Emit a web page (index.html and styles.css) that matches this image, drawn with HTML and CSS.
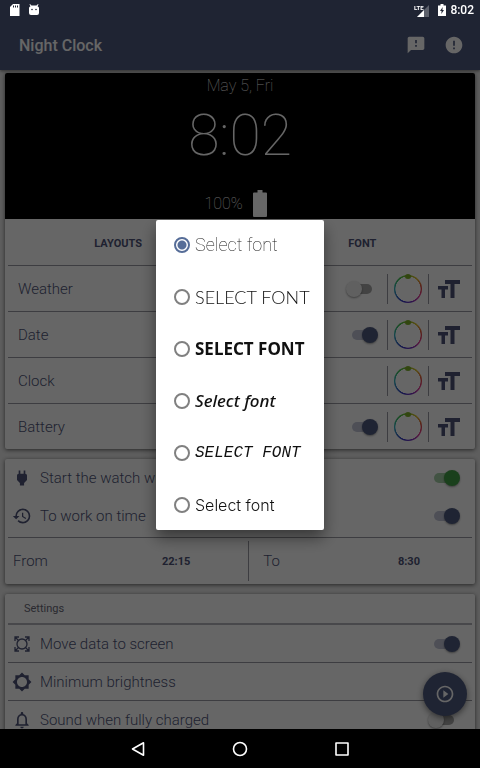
FILE: index.html
```html
<!DOCTYPE html>
<html lang="en">
<head>
	<meta charset="UTF-8">
	<meta name="viewport" content="width=device-width, initial-scale=1">
	<title>Night Clock</title>
	<link rel="stylesheet" href="styles.css">
</head>
<body>
<!-- shared icons -->
<svg class="defs" aria-hidden="true">
	<symbol id="size" viewBox="0 0 22 18">
		<path d="M7 0h15v4h-5.500v14h-4V4H7zM0 6h10v3.500H7V18H3.500V9.500H0z"/>
	</symbol>
</svg>

<div class="status">
	<svg width="10" height="12" viewBox="0 0 10 12"><path fill="#fff" d="M3 0h6.500v12H0V3z"/><path stroke="#1f2433" d="M3.500 1.500v2M5.500 1.500v2M7.500 1.500v2"/></svg>
	<svg width="12" height="12" viewBox="0 0 12 12"><path fill="#fff" d="M2 0l1.500 1.500h5L10 0l.5.5-1 1.700Q11 3 11 4v5q0 2-2 2H3q-2 0-2-2V4q0-1 1.500-1.800l-1-1.700z"/><circle cx="4" cy="5.500" r=".8" fill="#1f2433"/><circle cx="8" cy="5.500" r=".8" fill="#1f2433"/></svg>
	<svg class="signal" width="16" height="13" viewBox="0 0 16 13"><path fill="#5d616c" d="M15 1v12H3z"/><path fill="#fff" d="M10 6v7H3z"/><text x="0" y="6">LTE</text></svg>
	<svg width="8" height="12" viewBox="0 0 8 12"><path fill="#fff" d="M2.500 0h3v1.500H8V12H0V1.500h2.500z"/><path fill="#1f2433" d="M4.700 3L2 7h1.600L3.300 10 6 6H4.400z"/></svg>
	<span>8:02</span>
</div>

<header class="toolbar">
	<h1>Night Clock</h1>
	<button aria-label="Feedback"><svg width="20" height="20" viewBox="0 0 24 24"><path d="M20 2H4c-1.100 0-1.990.9-1.990 2L2 22l4-4h14c1.100 0 2-.9 2-2V4c0-1.100-.9-2-2-2zm-7 12h-2v-2h2v2zm0-4h-2V6h2v4z"/></svg></button>
	<button aria-label="About"><svg width="20" height="20" viewBox="0 0 24 24"><path d="M12 2C6.480 2 2 6.480 2 12s4.480 10 10 10 10-4.480 10-10S17.520 2 12 2zm1 15h-2v-2h2v2zm0-4h-2V7h2v6z"/></svg></button>
</header>

<main>
	<section class="card">
		<div class="preview">
			<p class="date">May 5, Fri</p>
			<p class="time">8:02</p>
			<p class="battery">100% <svg width="14" height="27" viewBox="0 0 14 27"><path d="M4.500 0h5v2.500H13q1 0 1 1V26q0 1-1 1H1q-1 0-1-1V3.500q0-1 1-1h3.500z"/></svg></p>
		</div>
		<div class="tabs">
			<button>LAYOUTS</button>
			<button>FONT</button>
		</div>
		<div class="row item">
			<label for="weather">Weather</label>
			<input type="checkbox" class="switch" id="weather">
			<button class="color" aria-label="Weather color"><span class="ring"></span></button>
			<button class="size" aria-label="Weather size"><svg width="22" height="18"><use href="#size"/></svg></button>
		</div>
		<div class="row item">
			<label for="date">Date</label>
			<input type="checkbox" class="switch" id="date" checked>
			<button class="color" aria-label="Date color"><span class="ring"></span></button>
			<button class="size" aria-label="Date size"><svg width="22" height="18"><use href="#size"/></svg></button>
		</div>
		<div class="row item">
			<span class="name">Clock</span>
			<button class="color" aria-label="Clock color"><span class="ring"></span></button>
			<button class="size" aria-label="Clock size"><svg width="22" height="18"><use href="#size"/></svg></button>
		</div>
		<div class="row item">
			<label for="battery">Battery</label>
			<input type="checkbox" class="switch" id="battery" checked>
			<button class="color" aria-label="Battery color"><span class="ring"></span></button>
			<button class="size" aria-label="Battery size"><svg width="22" height="18"><use href="#size"/></svg></button>
		</div>
	</section>

	<section class="card">
		<div class="row plain">
			<svg width="20" height="20" viewBox="0 0 24 24"><path d="M16.010 7L16 3h-2v4h-4V3H8v4h-.01C7 6.990 6 7.990 6 8.990v5.490L9.500 18v3h5v-3l3.500-3.510v-5.500c0-1-1-2-1.990-1.990z"/></svg>
			<label for="charge">Start the watch when charging</label>
			<input type="checkbox" class="switch green" id="charge" checked>
		</div>
		<div class="row plain">
			<svg width="20" height="20" viewBox="0 0 24 24"><path d="M13 3a9 9 0 0 0-9 9H1l3.890 3.890.07.14L9 12H6c0-3.870 3.130-7 7-7s7 3.130 7 7-3.130 7-7 7c-1.930 0-3.680-.79-4.940-2.060l-1.420 1.420A8.954 8.954 0 0 0 13 21a9 9 0 0 0 0-18zm-1 5v5l4.280 2.540.72-1.210-3.500-2.080V8H12z"/></svg>
			<label for="ontime">To work on time</label>
			<input type="checkbox" class="switch" id="ontime" checked>
		</div>
		<div class="period">
			<div><span>From</span><button>22:15</button></div>
			<div><span>To</span><button>8:30</button></div>
		</div>
	</section>

	<section class="card">
		<h2>Settings</h2>
		<div class="row">
			<svg width="20" height="20" viewBox="0 0 20 20"><g fill="none" stroke="#4e5478" stroke-width="1.300"><circle cx="10" cy="10" r="5"/><path d="M3 7V3h4M13 3h4v4M17 13v4h-4M7 17H3v-4M3 3l3.500 3.500M17 3l-3.500 3.500M17 17l-3.500-3.500M3 17l3.500-3.500"/></g></svg>
			<label for="move">Move data to screen</label>
			<input type="checkbox" class="switch" id="move" checked>
		</div>
		<div class="row">
			<svg width="20" height="20" viewBox="0 0 24 24"><path d="M20 15.310L23.310 12 20 8.690V4h-4.690L12 .69 8.690 4H4v4.690L.69 12 4 15.310V20h4.690L12 23.310 15.310 20H20v-4.690zM12 18c-3.310 0-6-2.690-6-6s2.690-6 6-6 6 2.690 6 6-2.690 6-6 6z"/></svg>
			<button class="name">Minimum brightness</button>
		</div>
		<div class="row">
			<svg width="20" height="20" viewBox="0 0 24 24"><path d="M12 22c1.100 0 2-.9 2-2h-4c0 1.100.9 2 2 2zm6-6v-5c0-3.070-1.630-5.640-4.500-6.320V4c0-.83-.67-1.500-1.500-1.500s-1.500.67-1.500 1.500v.68C7.640 5.360 6 7.920 6 11v5l-2 2v1h16v-1l-2-2zm-2 1H8v-6c0-2.480 1.510-4.500 4-4.500s4 2.020 4 4.500v6z"/></svg>
			<label for="sound">Sound when fully charged</label>
			<input type="checkbox" class="switch" id="sound">
		</div>
	</section>

	<button class="fab" aria-label="Start"><svg width="20" height="20" viewBox="0 0 24 24"><path d="M10 16.500l6-4.500-6-4.500v9zM12 2C6.480 2 2 6.480 2 12s4.480 10 10 10 10-4.480 10-10S17.520 2 12 2zm0 18c-4.410 0-8-3.590-8-8s3.590-8 8-8 8 3.590 8 8-3.590 8-8 8z"/></svg></button>
</main>

<nav>
	<button aria-label="Back"><svg width="24" height="24" viewBox="0 0 24 24"><path d="M17.500 5.800v12.400L6.500 12z"/></svg></button>
	<button aria-label="Home"><svg width="24" height="24" viewBox="0 0 24 24"><circle cx="12" cy="12" r="6.500"/></svg></button>
	<button aria-label="Recent"><svg width="24" height="24" viewBox="0 0 24 24"><path d="M6 6h12v12H6z"/></svg></button>
</nav>

<!-- font dialog -->
<div class="scrim">
	<form class="dialog" role="dialog" aria-label="Font">
		<label class="thin"><input type="radio" name="font" checked>Select font</label>
		<label class="hand"><input type="radio" name="font">SELECT FONT</label>
		<label class="brush"><input type="radio" name="font">SELECT FONT</label>
		<label class="script"><input type="radio" name="font">Select font</label>
		<label class="digital"><input type="radio" name="font">SELECT FONT</label>
		<label class="round"><input type="radio" name="font">Select font</label>
	</form>
</div>
</body>
</html>
```
FILE: styles.css
```css
*{padding:0;margin:0;box-sizing:border-box;}
body{
	height: 100vh;
	display:flex;
	flex-direction:column;
	overflow:hidden;
	background: #ebebeb;
	color:#4e5478;
	font-family: Roboto, "Liberation Sans", sans-serif;
	font-size:15px;
	font-weight:300;
}
button{
	border:0;
	background:none;
	color:inherit;
	font:inherit;
	cursor:pointer;
}
svg{
	display:block;
	flex:none;
	fill:currentColor;
}
.defs{
	position:absolute;
	width:0;
	height:0;
}

/* system bars stay above the scrim */
.status{
	position:fixed;
	top:0;
	left:0;
	right:0;
	z-index:3;
	height: 20px;
	padding:0 6px 0 10px;
	display:flex;
	align-items:center;
	gap:8px;
	color:#fff;
	font-size:12px;
	font-weight:500;
}
.status .signal{
	margin-left:auto;
	overflow:visible;
}
.status .signal text{
	fill:#fff;
	font-size:6px;
	font-weight:700;
}
.status span{
	margin-left:-4px;
}
nav{
	position:relative;
	z-index:3;
	flex:none;
	height: 39px;
	background:#000;
	display:flex;
	justify-content:center;
	align-items:center;
	gap:78px;
}
nav svg{
	fill:none;
	stroke:#fff;
	stroke-width:1.6;
	stroke-linejoin:round;
}

.toolbar{
	flex:none;
	height: 70px;
	padding:20px 16px 0 19px;
	display:flex;
	align-items:center;
	gap:18px;
	background:#4e5a80;
	color:#fff;
	box-shadow:0 1px 3px rgba(0,0,0,.5);
}
.toolbar h1{
	flex:1;
	font-size:16px;
	font-weight:500;
}

main{
	position:relative;
	flex:1;
	min-height:0;
	overflow:hidden;
	padding:3px 5px 0;
	display:flex;
	flex-direction:column;
	gap:10px;
}
.card{
	flex:none;
	background:#fff;
	border-radius:2px;
	box-shadow:0 1px 4px rgba(0,0,0,.6);
}

.preview{
	height: 146px;
	padding:3px 0 2px;
	background:#000;
	color:#fff;
	border-radius:2px 2px 0 0;
	display:flex;
	flex-direction:column;
	align-items:center;
	justify-content:space-between;
	font-size:16px;
	font-weight:100;
}
.preview .date{
	line-height:20px;
}
.preview .time{
	font-size:57px;
	line-height:60px;
	padding-bottom:14px;
}
.preview .battery{
	padding-right:9px;
	display:flex;
	align-items:center;
	gap:10px;
}

.tabs{
	height: 46px;
	padding:3px 21% 0 19%;
	display:flex;
	justify-content:space-between;
	align-items:center;
}
.tabs button{
	font-size:11px;
	font-weight:700;
}

.row{
	height: 38px;
	margin:0 3px;
	padding:0 12px 0 4px;
	border-top:1px solid #9a9aa2;
	display:flex;
	align-items:center;
	gap:8px;
}
.row label,
.row .name{
	flex:1;
	text-align:left;
	white-space:nowrap;
	overflow:hidden;
}
.row.item{
	height: 46px;
	padding-left:10px;
	gap:9px;
}
.row.plain{
	border-top:0;
}
.color{
	width: 42px;
	height: 30px;
	border:solid #9a9aa2;
	border-width:0 1px;
	display:flex;
	justify-content:center;
	align-items:center;
}
.ring{
	position:relative;
	width: 28px;
	height: 28px;
	border-radius:50%;
	background:radial-gradient(circle closest-side, #fff 88%, transparent 92%), conic-gradient(#90c020, #e0c030 40deg, #e04040 85deg, #e040a0 125deg, #7030c0 165deg, #3838c0 205deg, #30b0c0 270deg, #40c050 320deg, #90c020);
}
.ring::after{
	content:"";
	position:absolute;
	top:-1px;
	left:11px;
	width: 6px;
	height: 5px;
	border-radius:50%;
	background:#7eb02a;
}

.switch{
	appearance:none;
	position:relative;
	flex:none;
	width: 32px;
	height: 16px;
}
.switch::before{
	content:"";
	position:absolute;
	top:3px;
	left:6px;
	width: 20px;
	height: 10px;
	border-radius:5px;
	background:#a8a8a8;
}
.switch::after{
	content:"";
	position:absolute;
	top:0;
	left:0;
	width: 16px;
	height: 16px;
	border-radius:50%;
	background:#f1f1f1;
	box-shadow:0 1px 2px rgba(0,0,0,.4);
}
.switch:checked::before{
	background:#c2c6d8;
}
.switch:checked::after{
	left:16px;
	background:#4e5a80;
}
.switch.green:checked::before{
	background:#a5d0a7;
}
.switch.green:checked::after{
	background:#43a047;
}

.period{
	height: 47px;
	margin:2px 3px 0;
	padding:3px 0;
	border-top:1px solid #9a9aa2;
	display:flex;
}
.period div{
	flex:1;
	padding:0 52px 0 14px;
	display:flex;
	justify-content:space-between;
	align-items:center;
}
.period div:first-child{
	flex:0 0 52%;
	padding-left:5px;
	padding-right:58px;
	border-right:1px solid #9a9aa2;
}
.period button{
	font-size:11px;
	font-weight:700;
}

.card h2{
	height: 30px;
	margin:0 3px;
	padding:0 16px;
	border-bottom:1px solid #b4b4bc;
	color:#6a6a78;
	font-size:11px;
	font-weight:400;
	line-height:29px;
}
.card h2 + .row{
	border-top-color:#b4b4bc;
}

.fab{
	position:absolute;
	right:13px;
	bottom:13px;
	width: 44px;
	height: 44px;
	border-radius:50%;
	background:#4e5a80;
	color:#fff;
	box-shadow:0 2px 6px rgba(0,0,0,.5);
	display:flex;
	justify-content:center;
	align-items:center;
}

.scrim{
	position:fixed;
	top:0;
	right:0;
	bottom:0;
	left:0;
	z-index:2;
	padding:20px 0 39px;
	background:rgba(0,0,0,.6);
	display:flex;
	justify-content:center;
	align-items:center;
}
.dialog{
	min-width: 168px;
	padding:0 12px 0 18px;
	background:#fff;
	border-radius:2px;
	box-shadow:0 8px 16px rgba(0,0,0,.45);
	color:#111;
	display:flex;
	flex-direction:column;
	gap:2px;
}
.dialog label{
	height: 50px;
	display:flex;
	align-items:center;
	gap:5px;
	white-space:nowrap;
}
.dialog input{
	appearance:none;
	width: 16px;
	height: 16px;
	border:2px solid #808080;
	border-radius:50%;
}
.dialog input:checked{
	border-color:#566d98;
	background:radial-gradient(circle, #566d98 4px, transparent 5px);
}
/* each option is drawn in its own face */
.thin{
	font-size:18px;
	font-weight:100;
}
.hand{
	font-family:Lato, sans-serif;
	font-size:18px;
	font-weight:300;
}
.brush{
	font-family:"Noto Sans", sans-serif;
	font-size:17px;
	font-weight:700;
}
.script{
	font-family:"Noto Sans", sans-serif;
	font-size:17px;
	font-style:italic;
	font-weight:500;
}
.digital{
	font-family:"Liberation Mono", monospace;
	font-size:16px;
	font-style:italic;
	font-weight:400;
}
.round{
	font-family:Inter, sans-serif;
	font-size:16px;
	font-weight:300;
}
```
